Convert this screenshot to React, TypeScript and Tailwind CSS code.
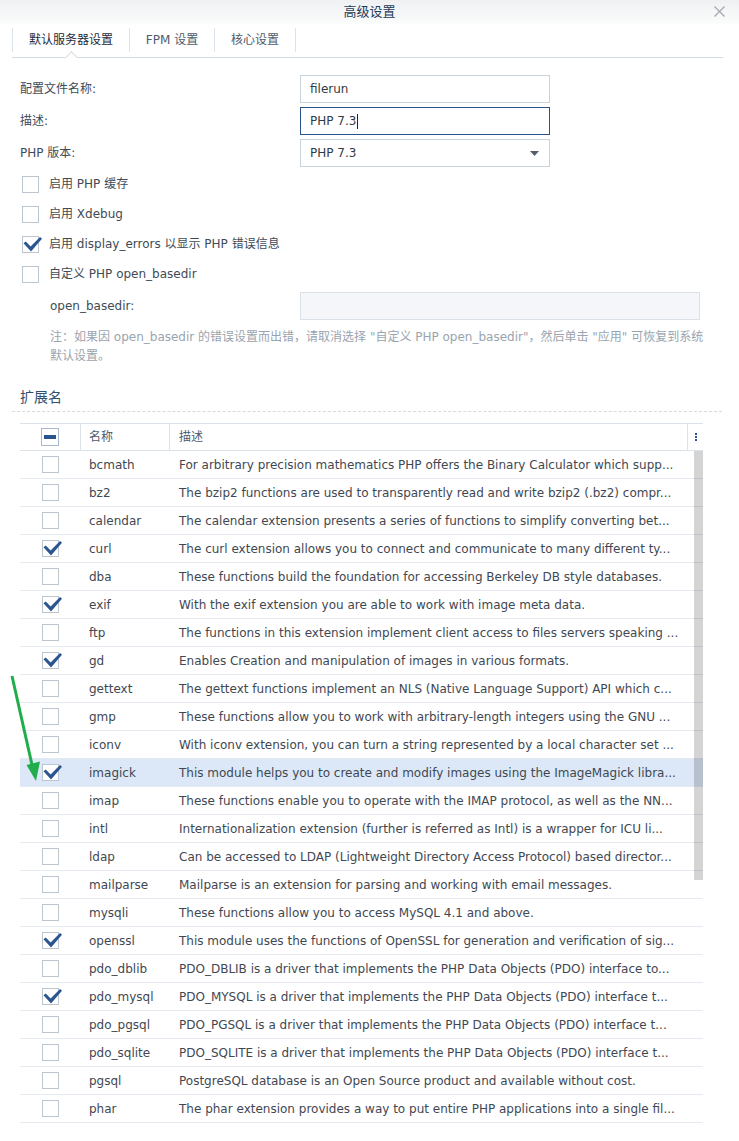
import type { ReactNode } from "react";

const FONT = "font-['DejaVu_Sans','Noto_Sans_CJK_SC',sans-serif]";

type Ext = { name: string; desc: string; on?: boolean };

const EXTENSIONS: Ext[] = [
  { name: "bcmath", desc: "For arbitrary precision mathematics PHP offers the Binary Calculator which supp..." },
  { name: "bz2", desc: "The bzip2 functions are used to transparently read and write bzip2 (.bz2) compr..." },
  { name: "calendar", desc: "The calendar extension presents a series of functions to simplify converting bet..." },
  { name: "curl", desc: "The curl extension allows you to connect and communicate to many different ty...", on: true },
  { name: "dba", desc: "These functions build the foundation for accessing Berkeley DB style databases." },
  { name: "exif", desc: "With the exif extension you are able to work with image meta data.", on: true },
  { name: "ftp", desc: "The functions in this extension implement client access to files servers speaking ..." },
  { name: "gd", desc: "Enables Creation and manipulation of images in various formats.", on: true },
  { name: "gettext", desc: "The gettext functions implement an NLS (Native Language Support) API which c..." },
  { name: "gmp", desc: "These functions allow you to work with arbitrary-length integers using the GNU ..." },
  { name: "iconv", desc: "With iconv extension, you can turn a string represented by a local character set ..." },
  { name: "imagick", desc: "This module helps you to create and modify images using the ImageMagick libra...", on: true },
  { name: "imap", desc: "These functions enable you to operate with the IMAP protocol, as well as the NN..." },
  { name: "intl", desc: "Internationalization extension (further is referred as Intl) is a wrapper for ICU li..." },
  { name: "ldap", desc: "Can be accessed to LDAP (Lightweight Directory Access Protocol) based director..." },
  { name: "mailparse", desc: "Mailparse is an extension for parsing and working with email messages." },
  { name: "mysqli", desc: "These functions allow you to access MySQL 4.1 and above." },
  { name: "openssl", desc: "This module uses the functions of OpenSSL for generation and verification of sig...", on: true },
  { name: "pdo_dblib", desc: "PDO_DBLIB is a driver that implements the PHP Data Objects (PDO) interface to..." },
  { name: "pdo_mysql", desc: "PDO_MYSQL is a driver that implements the PHP Data Objects (PDO) interface t...", on: true },
  { name: "pdo_pgsql", desc: "PDO_PGSQL is a driver that implements the PHP Data Objects (PDO) interface t..." },
  { name: "pdo_sqlite", desc: "PDO_SQLITE is a driver that implements the PHP Data Objects (PDO) interface t..." },
  { name: "pgsql", desc: "PostgreSQL database is an Open Source product and available without cost." },
  { name: "phar", desc: "The phar extension provides a way to put entire PHP applications into a single fil..." },
];

function CheckBox({ checked = false }: { checked?: boolean }) {
  return (
    <span className="relative inline-block w-[17px] h-[17px] shrink-0 border border-[#bcc6d1] bg-white">
      {checked && (
        <svg
          className="absolute left-[-1px] top-[-1px] overflow-visible"
          width="20"
          height="18"
          viewBox="0 0 20 18"
          aria-hidden="true"
        >
          <path d="M1.5 7.3 L3.8 5.4 L8.6 10.6 L18 1 L20 2.8 L9 15.6 Z" fill="#2b5591" />
        </svg>
      )}
    </span>
  );
}

function FieldRow({ label, children }: { label: string; children: ReactNode }) {
  return (
    <div className="flex items-center h-[28px]">
      <div className="w-[280px] text-[12px] text-[#414b55]">{label}</div>
      {children}
    </div>
  );
}

function OptionRow({ label, checked }: { label: string; checked?: boolean }) {
  return (
    <div className="flex items-center h-[30px] pl-[2px] gap-[10px]">
      <CheckBox checked={checked} />
      <span className="text-[12px] text-[#414b55]">{label}</span>
    </div>
  );
}

export default function App() {
  return (
    <div className={`relative w-[739px] h-[1141px] overflow-hidden bg-white ${FONT}`}>
      {/* title bar */}
      <div className="relative h-[24px] flex items-center justify-center bg-gradient-to-b from-[#eef0f2] to-[#fbfcfc]">
        <span className="text-[13px] text-[#243b58]">高级设置</span>
        <svg className="absolute right-[14px] top-[6px]" width="11" height="11" viewBox="0 0 11 11" aria-hidden="true">
          <path d="M0.5 0.5 L10.5 10.5 M10.5 0.5 L0.5 10.5" stroke="#a3a9b0" strokeWidth="1.3" />
        </svg>
      </div>

      {/* tabs */}
      <div className="relative ml-[12px] w-[711px] h-[34px] border-b border-[#d5dbe2]">
        <div className="flex pt-[4px] text-[12px]">
          <div className="h-[24px] w-[118px] flex items-center justify-center border-l border-r border-[#dde3ea] text-[#1d2c3d]">
            默认服务器设置
          </div>
          <div className="h-[24px] w-[85px] flex items-center justify-center border-r border-[#dde3ea] text-[#4e5c6b]">
            FPM 设置
          </div>
          <div className="h-[24px] w-[81px] flex items-center justify-center border-r border-[#dde3ea] text-[#4e5c6b]">
            核心设置
          </div>
        </div>
        <span className="absolute left-[55px] bottom-[-5px] w-[9px] h-[9px] rotate-45 bg-white border-l border-t border-[#d5dbe2]" />
      </div>

      {/* form */}
      <div className="px-[20px] pt-[17px]">
        <div className="flex flex-col gap-[4px]">
          <FieldRow label="配置文件名称:">
            <div className="w-[250px] h-[28px] border border-[#c9d3de] px-[9px] flex items-center text-[12px] text-[#333b44]">
              filerun
            </div>
          </FieldRow>
          <FieldRow label="描述:">
            <div className="w-[250px] h-[28px] border border-[#29528c] px-[9px] flex items-center text-[12px] text-[#333b44]">
              PHP 7.3<span className="ml-[1px] w-[1px] h-[15px] bg-[#222]" />
            </div>
          </FieldRow>
          <FieldRow label="PHP 版本:">
            <div className="w-[250px] h-[28px] border border-[#c9d3de] pl-[9px] pr-[10px] flex items-center justify-between text-[12px] text-[#333b44]">
              <span>PHP 7.3</span>
              <svg width="9" height="5" viewBox="0 0 9 5" aria-hidden="true">
                <path d="M0 0 H9 L4.5 5 Z" fill="#565f69" />
              </svg>
            </div>
          </FieldRow>
        </div>

        <div className="mt-[2px]">
          <OptionRow label="启用 PHP 缓存" />
          <OptionRow label="启用 Xdebug" />
          <OptionRow label="启用 display_errors 以显示 PHP 错误信息" checked />
          <OptionRow label="自定义 PHP open_basedir" />
        </div>

        <div className="mt-[3px] flex items-center h-[28px] pl-[30px]">
          <div className="w-[250px] text-[12px] text-[#414b55]">open_basedir:</div>
          <div className="w-[400px] h-[28px] border border-[#dbe1e8] bg-[#f4f6f9]" />
        </div>

        <div className="mt-[8px] pl-[30px] text-[12px] leading-[19px] text-[#9aa4ae] whitespace-nowrap">
          <div>注：如果因 open_basedir 的错误设置而出错，请取消选择 "自定义 PHP open_basedir"，然后单击 "应用" 可恢复到系统</div>
          <div>默认设置。</div>
        </div>
      </div>

      {/* extensions heading */}
      <div className="mt-[21px] ml-[12px] w-[710px] pl-[8px] pb-[4px] border-b border-dashed border-[#d3dae2]">
        <div className="text-[14px] leading-[20px] text-[#34506f]">扩展名</div>
      </div>

      {/* table */}
      <div className="relative mt-[11px] ml-[20px] w-[683px] text-[12px]">
        <div className="flex h-[28px] border-t border-b border-[#dbe2ea] text-[#4b5c70]">
          <div className="w-[60px] flex items-center justify-center">
            <span className="relative w-[18px] h-[18px] border border-[#a9b9cc] bg-white flex items-center justify-center">
              <span className="w-[12px] h-[4px] bg-[#2b5591]" />
            </span>
          </div>
          <div className="w-[89px] border-l border-[#dbe2ea] flex items-center pl-[8px]">名称</div>
          <div className="w-[518px] border-l border-[#dbe2ea] flex items-center pl-[9px]">描述</div>
          <div className="flex-1 border-l border-[#dbe2ea] flex items-center justify-center">
            <span className="flex flex-col gap-[1px]">
              <span className="w-[2px] h-[2px] bg-[#2b5591]" />
              <span className="w-[2px] h-[2px] bg-[#2b5591]" />
              <span className="w-[2px] h-[2px] bg-[#2b5591]" />
            </span>
          </div>
        </div>

        <div className="relative">
          {EXTENSIONS.map((ext) => (
            <div
              key={ext.name}
              className={`flex h-[28px] border-b border-[#e5eaf0] text-[#3f4852] ${ext.name === "imagick" ? "bg-[#dce8f8]" : ""}`}
            >
              <div className="w-[60px] flex items-center justify-center">
                <CheckBox checked={ext.on} />
              </div>
              <div className="w-[89px] pl-[9px] flex items-center">{ext.name}</div>
              <div className="w-[518px] pl-[10px] flex items-center overflow-hidden whitespace-nowrap">{ext.desc}</div>
            </div>
          ))}
          <div className="absolute right-0 top-0 w-[9px] h-[429px] bg-black/[0.17]" />
        </div>
      </div>

      {/* annotation arrow */}
      <svg className="absolute left-0 top-0 pointer-events-none" width="739" height="1141" aria-hidden="true">
        <line x1="12" y1="676" x2="32.5" y2="767" stroke="#21ad4b" strokeWidth="3" />
        <path d="M26.5 765 L40 761.5 L36 781 Z" fill="#21ad4b" />
      </svg>
    </div>
  );
}
